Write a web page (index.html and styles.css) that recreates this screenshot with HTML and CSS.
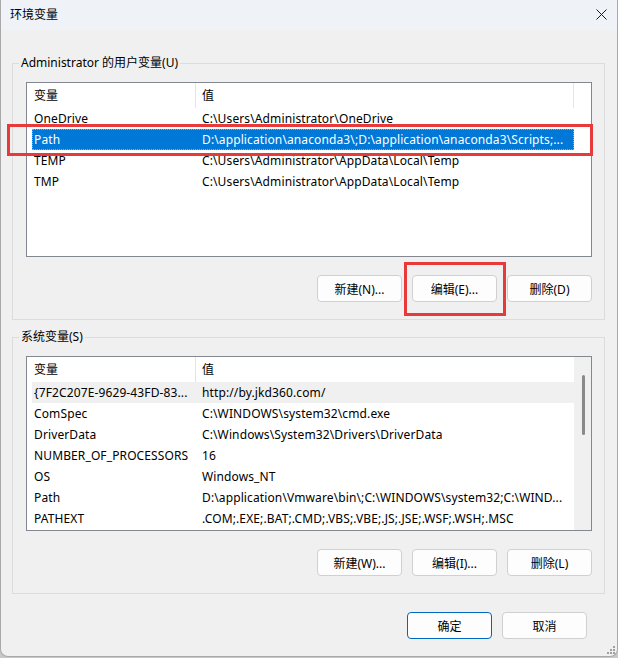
FILE: index.html
```html
<!DOCTYPE html>
<html lang="zh-CN">
<head>
    <meta charset="UTF-8">
    <meta name="viewport" content="width=device-width, initial-scale=1.0">
    <title>环境变量</title>
    <link rel="stylesheet" href="styles.css">
</head>
<body>
    <div class="window">
        <!-- 标题栏 -->
        <div class="titlebar">
            <span class="title">环境变量</span>
            <span class="close">
                <svg width="11" height="11" viewBox="0 0 11 11"><path d="M0.5 0.5 L10.5 10.5 M10.5 0.5 L0.5 10.5" stroke="#1a1a1a" stroke-width="1" fill="none"/></svg>
            </span>
        </div>

        <div class="content">
            <!-- 用户变量 -->
            <fieldset class="group">
                <legend>Administrator 的用户变量(U)</legend>
                <div class="list">
                    <div class="list-head">
                        <div class="head-name">变量</div>
                        <div class="head-value">值</div>
                    </div>
                    <div class="row"><span class="cell-name">OneDrive</span><span class="cell-value">C:\Users\Administrator\OneDrive</span></div>
                    <div class="row selected"><span class="cell-name">Path</span><span class="cell-value">D:\application\anaconda3\;D:\application\anaconda3\Scripts;...</span></div>
                    <div class="row"><span class="cell-name">TEMP</span><span class="cell-value">C:\Users\Administrator\AppData\Local\Temp</span></div>
                    <div class="row"><span class="cell-name">TMP</span><span class="cell-value">C:\Users\Administrator\AppData\Local\Temp</span></div>
                </div>
                <div class="buttons">
                    <button class="btn">新建(N)...</button>
                    <button class="btn">编辑(E)...</button>
                    <button class="btn">删除(D)</button>
                </div>
            </fieldset>

            <!-- 系统变量 -->
            <fieldset class="group group-system">
                <legend>系统变量(S)</legend>
                <div class="list list-scroll">
                    <div class="list-rows">
                        <div class="list-head">
                            <div class="head-name">变量</div>
                            <div class="head-value head-last">值</div>
                        </div>
                        <div class="row hover"><span class="cell-name">{7F2C207E-9629-43FD-83...</span><span class="cell-value">http://by.jkd360.com/</span></div>
                        <div class="row"><span class="cell-name">ComSpec</span><span class="cell-value">C:\WINDOWS\system32\cmd.exe</span></div>
                        <div class="row"><span class="cell-name">DriverData</span><span class="cell-value">C:\Windows\System32\Drivers\DriverData</span></div>
                        <div class="row"><span class="cell-name">NUMBER_OF_PROCESSORS</span><span class="cell-value">16</span></div>
                        <div class="row"><span class="cell-name">OS</span><span class="cell-value">Windows_NT</span></div>
                        <div class="row"><span class="cell-name">Path</span><span class="cell-value">D:\application\Vmware\bin\;C:\WINDOWS\system32;C:\WIND...</span></div>
                        <div class="row"><span class="cell-name">PATHEXT</span><span class="cell-value">.COM;.EXE;.BAT;.CMD;.VBS;.VBE;.JS;.JSE;.WSF;.WSH;.MSC</span></div>
                    </div>
                    <div class="scrollbar"><div class="thumb"></div></div>
                </div>
                <div class="buttons">
                    <button class="btn">新建(W)...</button>
                    <button class="btn">编辑(I)...</button>
                    <button class="btn">删除(L)</button>
                </div>
            </fieldset>

            <div class="buttons footer">
                <button class="btn btn-default">确定</button>
                <button class="btn">取消</button>
            </div>
        </div>

        <!-- 红色标注框 -->
        <div class="mark mark-row"></div>
        <div class="mark mark-edit"></div>

        <svg class="grip" width="9" height="9" viewBox="0 0 9 9">
            <rect x="7" y="1" width="2" height="2" fill="#a0a0a0"/>
            <rect x="4" y="4" width="2" height="2" fill="#a0a0a0"/>
            <rect x="7" y="4" width="2" height="2" fill="#a0a0a0"/>
            <rect x="1" y="7" width="2" height="2" fill="#a0a0a0"/>
            <rect x="4" y="7" width="2" height="2" fill="#a0a0a0"/>
            <rect x="7" y="7" width="2" height="2" fill="#a0a0a0"/>
        </svg>
    </div>
</body>
</html>
```

FILE: styles.css
```css
html {
    background-color: #c8c8c8;
}
body {
    margin: 0;
    padding: 0;
    font-family: "Noto Sans", "Noto Sans CJK SC", sans-serif;
    font-size: 12px;
    color: #000;
}
.window {
    position: relative;
    width: 618px;
    height: 657px;
    box-sizing: border-box;
    background-color: #f0f0f0;
    border: 1px solid #a8a8a8;
    border-top: none;
    border-radius: 0 0 8px 8px;
    overflow: hidden;
}
.titlebar {
    height: 28px;
    background-color: #eff3f8;
    display: flex;
    align-items: center;
    justify-content: space-between;
    padding: 0 10px 2px 9px;
}
.title {
    font-size: 12px;
}
.close {
    display: flex;
}
.content {
    padding-top: 25px;
}
.group {
    margin: 0 12px 0 11px;
    padding: 11px 12px 17px 13px;
    border: 1px solid #dcdcdc;
    min-width: 0;
}
.group legend {
    margin-left: -7px;
    padding: 0 2px;
    line-height: 16px;
    height: 16px;
}
.group-system {
    margin-top: 9px;
}
.list {
    height: 175px;
    box-sizing: border-box;
    border: 1px solid #828790;
    background-color: #fff;
    overflow: hidden;
    letter-spacing: 0.12px;
}
.list-scroll {
    display: flex;
}
.list-rows {
    flex: 1;
}
.list-head {
    display: flex;
    height: 25px;
    margin-left: 5px;
}
.head-name {
    width: 161px;
    padding-left: 2px;
    line-height: 25px;
    border-right: 1px solid #e5e5e5;
}
.head-value {
    width: 371px;
    padding-left: 6px;
    line-height: 25px;
    border-right: 1px solid #e5e5e5;
}
.head-last {
    border-right: none;
}
.row {
    display: flex;
    height: 21px;
    line-height: 21px;
    width: 542px;
    margin-left: 5px;
    white-space: nowrap;
    overflow: hidden;
}
.cell-name {
    width: 162px;
    flex-shrink: 0;
    padding-left: 2px;
    overflow: hidden;
}
.cell-value {
    padding-left: 6px;
    overflow: hidden;
}
.row.selected {
    background-color: #0078d7;
    color: #fff;
    outline: 1px dotted #e0a040;
    outline-offset: -1px;
}
.row.hover {
    background-color: #f0f0f0;
}
.scrollbar {
    width: 18px;
    background-color: #f0f0f0;
}
.thumb {
    width: 3px;
    height: 60px;
    margin: 18px 0 0 8px;
    background-color: #8a8a8a;
    border-radius: 2px;
}
.buttons {
    display: flex;
    justify-content: flex-end;
    gap: 10px;
    margin-top: 18px;
}
.btn {
    width: 85px;
    height: 27px;
    padding: 0;
    font-family: "Noto Sans", "Noto Sans CJK SC", sans-serif;
    font-size: 12px;
    color: #000;
    background-color: #fdfdfd;
    border: 1px solid #d0d0d0;
    border-radius: 4px;
}
.footer {
    padding-right: 30px;
}
.btn-default {
    border-color: #0067c0;
}
.mark {
    position: absolute;
    border: 3px solid #e8393b;
}
.mark-row {
    left: 6px;
    top: 124px;
    width: 580px;
    height: 26px;
}
.mark-edit {
    left: 403px;
    top: 262px;
    width: 96px;
    height: 48px;
}
.grip {
    position: absolute;
    right: 2px;
    bottom: 2px;
}
```
